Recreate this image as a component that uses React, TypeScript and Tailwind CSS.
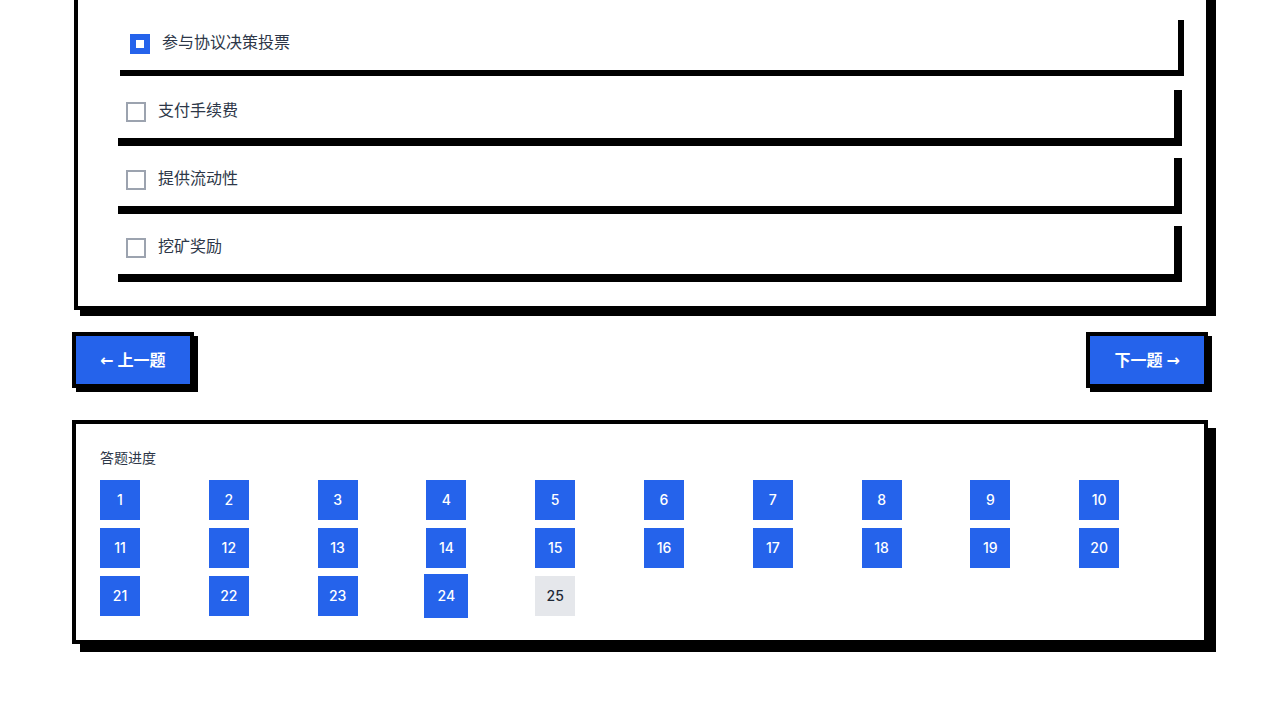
import { useState } from "react";
import clsx from "clsx";

const options = ["参与协议决策投票", "支付手续费", "提供流动性", "挖矿奖励"];
const questions = Array.from({ length: 25 }, (_, i) => i + 1);

function Option({ text, checked, onToggle }: { text: string; checked: boolean; onToggle: () => void }) {
  return (
    <label
      className={clsx(
        "flex cursor-pointer items-start gap-3 bg-white p-4 text-[#2d3748]",
        checked ? "translate-x-1 shadow-[6px_6px_0_0_#000]" : "shadow-[8px_8px_0_0_#000]",
      )}
    >
      <input
        type="checkbox"
        checked={checked}
        onChange={onToggle}
        className="mt-1 size-5 shrink-0 appearance-none border-2 border-[#9ca3af] bg-white checked:border-[6px] checked:border-[#2563eb]"
      />
      <span className="font-['Noto_Sans','Noto_Sans_CJK_SC',sans-serif]">{text}</span>
    </label>
  );
}

function NavButton({ children, onClick }: { children: string; onClick: () => void }) {
  return (
    <button
      type="button"
      onClick={onClick}
      className="border-4 border-black bg-[#2563eb] px-6 py-3 font-['Open_Sans','DejaVu_Sans','Noto_Sans_CJK_SC',sans-serif] font-bold text-white shadow-[4px_4px_0_0_#000]"
    >
      {children}
    </button>
  );
}

export default function App() {
  const [selected, setSelected] = useState<number[]>([0]);
  const [current, setCurrent] = useState(24);

  const toggle = (i: number) =>
    setSelected((s) => (s.includes(i) ? s.filter((v) => v !== i) : [...s, i]));

  return (
    <div className="min-h-screen overflow-hidden bg-white font-['Inter','Noto_Sans_CJK_SC',sans-serif] text-base text-[#1f2937]">
      <main className="mx-auto max-w-[1200px] px-8 pb-8">
        <section className="-mt-6 translate-x-0.5 translate-y-0.5 border-4 border-black bg-white p-8 shadow-[6px_6px_0_0_#000]">
          <div className="flex flex-col gap-3">
            {options.map((text, i) => (
              <Option key={text} text={text} checked={selected.includes(i)} onToggle={() => toggle(i)} />
            ))}
          </div>
        </section>

        <nav className="mt-6 flex justify-between">
          <NavButton onClick={() => setCurrent((c) => Math.max(1, c - 1))}>← 上一题</NavButton>
          <NavButton onClick={() => setCurrent((c) => Math.min(25, c + 1))}>下一题 →</NavButton>
        </nav>

        <section className="mt-8 border-4 border-black bg-white p-6 shadow-[8px_8px_0_0_#000]">
          <h2 className="mb-3 text-sm text-[#2d3748]">答题进度</h2>
          <div className="grid grid-cols-10 gap-2">
            {questions.map((n) => (
              <button
                key={n}
                type="button"
                onClick={() => setCurrent(n)}
                className={clsx(
                  "size-10 text-sm font-medium",
                  n <= 24 ? "bg-[#2563eb] text-white" : "bg-[#e5e7eb] text-[#1f2937]",
                  n === current && "ring-2 ring-[#2563eb]",
                )}
              >
                {n}
              </button>
            ))}
          </div>
        </section>
      </main>
    </div>
  );
}
